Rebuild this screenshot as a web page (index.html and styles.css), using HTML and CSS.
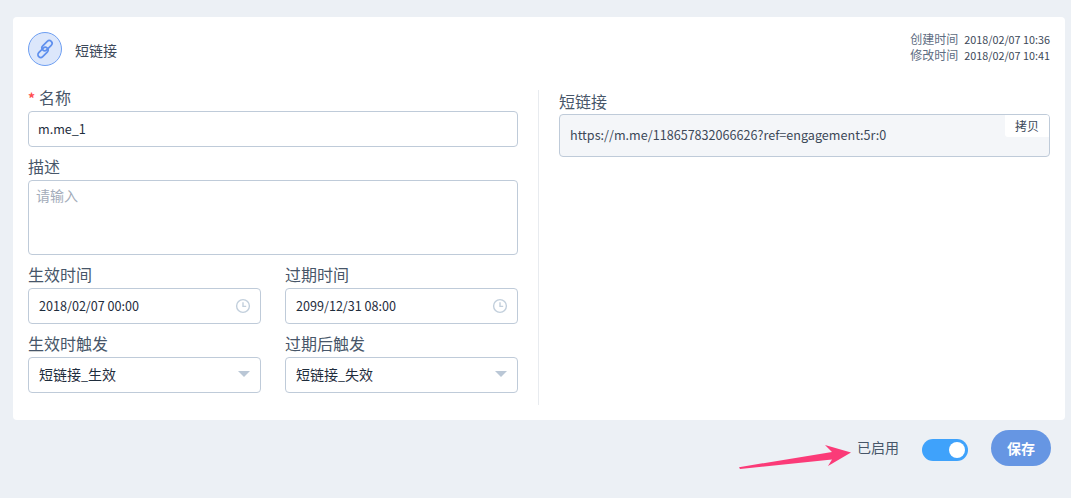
FILE: index.html
```html
<!DOCTYPE html>
<html lang="zh">
<head>
<meta charset="utf-8">
<title>短链接</title>
<link rel="stylesheet" href="styles.css">
</head>
<body>
<main class="card">
  <header class="head">
    <div class="head-title">
      <span class="badge">
        <svg width="22" height="22" viewBox="0 0 22 22" fill="none" stroke="#5f90ee" stroke-width="1.7">
          <rect x="10.2" y="1.6" width="5.6" height="12" rx="2.8" transform="rotate(45 13 7.6)"/>
          <rect x="6.2" y="8.4" width="5.6" height="12" rx="2.8" transform="rotate(45 9 14.4)"/>
        </svg>
      </span>
      <span class="title">短链接</span>
    </div>
    <div class="meta">
      <div class="meta-row"><span class="meta-key">创建时间</span>2018/02/07 10:36</div>
      <div class="meta-row"><span class="meta-key">修改时间</span>2018/02/07 10:41</div>
    </div>
  </header>

  <div class="body-row">
    <section class="form">
      <div class="field">
        <label class="label"><span class="req">*</span>名称</label>
        <div class="control lat name">m.me_1</div>
      </div>
      <div class="field">
        <label class="label">描述</label>
        <div class="control area">请输入</div>
      </div>
      <div class="pair">
        <div class="field">
          <label class="label">生效时间</label>
          <div class="control with-icon lat">2018/02/07 00:00
            <svg class="clock" width="16" height="16" viewBox="0 0 16 16" fill="none" stroke="#c2cfdc" stroke-width="1.4"><circle cx="8" cy="8" r="6.4"/><path d="M8 4.2V8.4H11.2"/></svg>
          </div>
        </div>
        <div class="field">
          <label class="label">过期时间</label>
          <div class="control with-icon lat">2099/12/31 08:00
            <svg class="clock" width="16" height="16" viewBox="0 0 16 16" fill="none" stroke="#c2cfdc" stroke-width="1.4"><circle cx="8" cy="8" r="6.4"/><path d="M8 4.2V8.4H11.2"/></svg>
          </div>
        </div>
      </div>
      <div class="pair">
        <div class="field">
          <label class="label">生效时触发</label>
          <div class="control with-icon select"><span>短链接<span class="lat">_</span>生效</span><span class="caret"></span></div>
        </div>
        <div class="field">
          <label class="label">过期后触发</label>
          <div class="control with-icon select"><span>短链接<span class="lat">_</span>失效</span><span class="caret"></span></div>
        </div>
      </div>
    </section>

    <aside class="side">
      <label class="label">短链接</label>
      <div class="url lat">https://m.me/118657832066626?ref=engagement:5r:0<button class="copy">拷贝</button></div>
    </aside>
  </div>
</main>

<footer class="foot">
  <span class="status">已启用</span>
  <span class="toggle"><span class="knob"></span></span>
  <button class="save">保存</button>
</footer>

<svg class="arrow" width="120" height="30" viewBox="735 442 120 30"><path fill="#fb3b78" d="M739 467.2L832 452L825 445L851 452.5L828 466L832 459.5L740 469Z"/></svg>
</body>
</html>
```

FILE: styles.css
```css
* { box-sizing: border-box; }
html, body { height: 100%; }
body {
  margin: 0;
  padding: 17px 6px 0 13px;
  background: #ecf0f5;
  font-family: "Noto Sans CJK SC", "Noto Sans", sans-serif;
  color: #475669;
  overflow: hidden;
  position: relative;
}
.card {
  height: 403px;
  padding: 15px;
  background: #fff;
  border-radius: 4px;
}
.head {
  display: flex;
  justify-content: space-between;
  height: 34px;
}
.head-title { display: flex; align-items: center; }
.badge {
  width: 34px;
  height: 34px;
  border-radius: 50%;
  border: 1px solid #6e9ff2;
  background: #dce7fb;
  display: flex;
  align-items: center;
  justify-content: center;
}
.title { margin: 1px 0 0 13px; font-size: 14px; line-height: 20px; color: #3c4858; }
.meta {
  margin-top: -1px;
  font-size: 10.8px;
  text-align: right;
  color: #3c4858;
}
.meta-row { height: 16px; line-height: 16px; }
.meta-key { margin-right: 6px; font-size: 12px; line-height: 16px; color: #5e6d82; }
.body-row { display: flex; margin-top: 21px; height: 318px; }
.form { width: 490px; flex: none; }
.field { margin-bottom: 9px; }
.label {
  display: block;
  height: 22px;
  margin-bottom: 2px;
  font-size: 16px;
  line-height: 20px;
  color: #475669;
}
.req { color: #ff4d4f; font-size: 14px; font-weight: 700; margin-right: 4px; }
.control {
  height: 36px;
  padding: 0 10px;
  border: 1px solid #bfcbd9;
  border-radius: 4px;
  background: #fff;
  font-size: 14px;
  line-height: 34px;
  color: #1f2d3d;
  position: relative;
}
.control.lat, .url.lat, .lat { font-size: 12.6px; }
.control.name { padding-left: 9px; }
.control.area { height: 75px; padding: 4px 7px; line-height: 20px; color: #a3acba; }
.pair { display: grid; grid-template-columns: 233px 233px; column-gap: 24px; }
.pair .control { padding-left: 10px; }
.with-icon { display: flex; align-items: center; justify-content: space-between; padding-right: 9px; }
.clock { flex: none; }
.select { padding-right: 10px; padding-bottom: 2px; }
.caret {
  width: 0;
  height: 0;
  border-left: 6px solid transparent;
  border-right: 6px solid transparent;
  border-top: 6px solid #bac7d6;
}
.side {
  flex: 1;
  margin: 3px 0 0 20px;
  padding: 1px 0 0 20px;
  border-left: 1px solid #e8ebef;
}
.side .label { margin-bottom: 1px; }
.url {
  height: 43px;
  padding: 0 10px;
  border: 1px solid #bfcbd9;
  border-radius: 4px;
  background: #f4f6f9;
  font-size: 14px;
  line-height: 39px;
  color: #3c4858;
  position: relative;
}
.copy {
  position: absolute;
  top: 0;
  right: 0;
  width: 44px;
  height: 22px;
  padding: 0;
  border: 0;
  border-radius: 0 3px 0 3px;
  background: #fff;
  font: 12px/22px "Noto Sans CJK SC", sans-serif;
  color: #3c4858;
}
.foot {
  display: flex;
  justify-content: flex-end;
  align-items: flex-start;
  gap: 23px;
  padding: 10px 14px 0 0;
}
.status { font-size: 14px; line-height: 34px; color: #475669; }
.toggle {
  width: 46px;
  height: 22px;
  margin-top: 9px;
  padding: 3px;
  border-radius: 11px;
  background: #3fa2fb;
  display: flex;
  justify-content: flex-end;
}
.knob { width: 16px; height: 16px; border-radius: 50%; background: #fff; }
.save {
  width: 60px;
  height: 36px;
  padding: 0;
  border: 0;
  border-radius: 18px;
  background: #6696e3;
  color: #fff;
  font: 700 14px/36px "Noto Sans CJK SC", sans-serif;
}
.arrow { position: absolute; left: 735px; top: 442px; }
```
